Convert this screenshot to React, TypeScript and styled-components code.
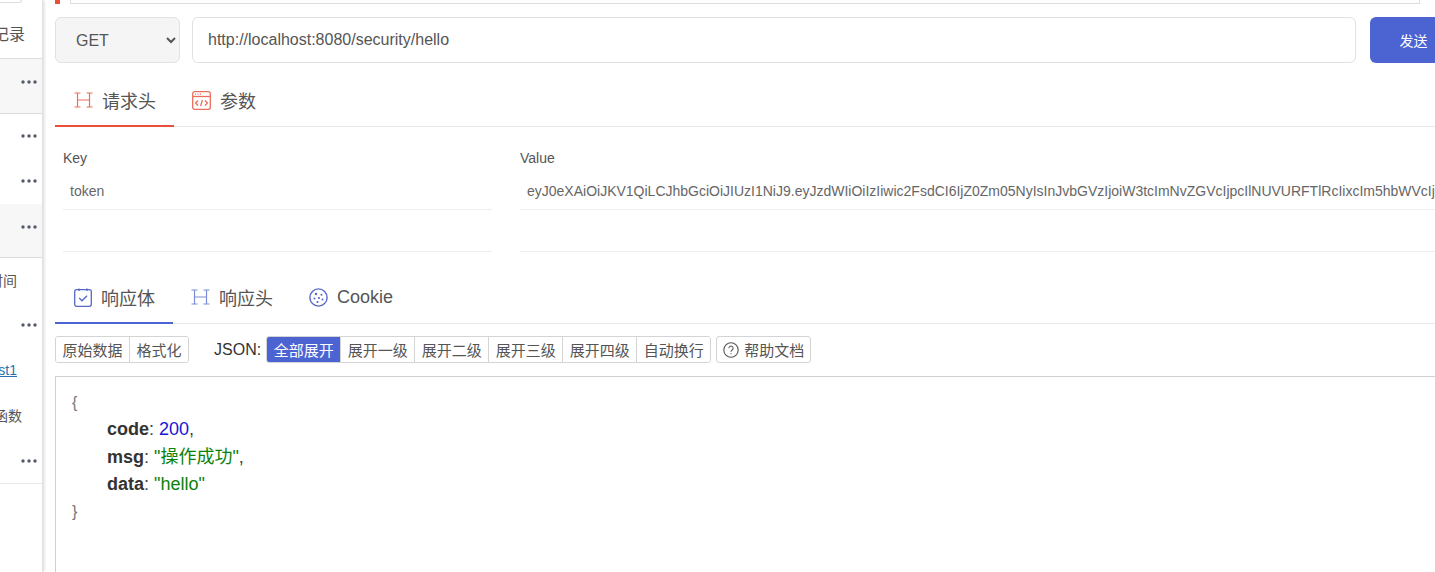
import { createGlobalStyle, styled } from 'styled-components';

const GlobalStyle = createGlobalStyle`
    html, body {
        margin: 0;
        padding: 0;
        background: #fff;
        overflow: hidden;
    }
    * {
        box-sizing: border-box;
    }
    body {
        font-family: 'Liberation Sans', 'Noto Sans CJK SC', sans-serif;
        color: #555;
    }
`;

const TOKEN =
    'eyJ0eXAiOiJKV1QiLCJhbGciOiJIUzI1NiJ9.eyJzdWIiOiIzIiwic2FsdCI6IjZ0Zm05NyIsInJvbGVzIjoiW3tcImNvZGVcIjpcIlNUVURFTlRcIixcIm5hbWVcIjpcIg';

const HISTORY = [
    { selected: true },
    {},
    {},
    { selected: true },
    { label: '时间', trail: 20 },
    {},
    { label: 'test1', trail: 20, link: true },
    { label: '函数', trail: 15 },
    {},
];

const JSON_LEVELS = ['全部展开', '展开一级', '展开二级', '展开三级', '展开四级', '自动换行'];

function Dots() {
    return (
        <svg width='16' height='4' viewBox='0 0 16 4'>
            <circle cx='2' cy='2' r='1.7' fill='#555b66' />
            <circle cx='8' cy='2' r='1.7' fill='#555b66' />
            <circle cx='14' cy='2' r='1.7' fill='#555b66' />
        </svg>
    );
}

function HeaderIcon({ color }: { color: string }) {
    return (
        <svg width='19' height='16' viewBox='0 0 19 16' fill='none' stroke={color} strokeWidth='1.2'>
            <path d='M0.5 1h6M12.5 1h6M0.5 15h6M12.5 15h6M3.5 1v14M15.5 1v14M3.5 8h12' />
        </svg>
    );
}

function ParamsIcon() {
    return (
        <svg width='19' height='19' viewBox='0 0 19 19' fill='none' stroke='#ea6f5d' strokeWidth='1.3'>
            <rect x='0.7' y='0.7' width='17.6' height='17.6' rx='2' />
            <path d='M1 5.5h17' />
            <path d='M3 3.2h1M5.5 3.2h1M8 3.2h1' />
            <path d='M6 9.5l-2.4 2.5L6 14.5M13 9.5l2.4 2.5L13 14.5M10.4 9l-1.8 6' />
        </svg>
    );
}

function BodyIcon() {
    return (
        <svg width='18' height='19' viewBox='0 0 18 19' fill='none' stroke='#5468c8' strokeWidth='1.3'>
            <rect x='0.7' y='1.7' width='16.6' height='16.6' rx='2' />
            <path d='M5 0.5v2.4M13 0.5v2.4' />
            <path d='M5.2 10l2.8 2.8 5-5' />
        </svg>
    );
}

function CookieIcon() {
    return (
        <svg width='19' height='19' viewBox='0 0 19 19' fill='none'>
            <circle cx='9.5' cy='9.5' r='8.6' stroke='#5468c8' strokeWidth='1.4' />
            <circle cx='7' cy='6' r='1.2' fill='#5468c8' />
            <circle cx='12.5' cy='6.8' r='1' fill='#5468c8' />
            <circle cx='5.5' cy='10.5' r='1' fill='#5468c8' />
            <circle cx='10' cy='10' r='1.1' fill='#5468c8' />
            <circle cx='13.5' cy='11.5' r='1' fill='#5468c8' />
            <circle cx='8.5' cy='14' r='1.1' fill='#5468c8' />
        </svg>
    );
}

function HelpIcon() {
    return (
        <svg width='16' height='16' viewBox='0 0 16 16' fill='none' stroke='#555' strokeWidth='1.1'>
            <circle cx='8' cy='8' r='7.2' />
            <path d='M5.9 6.2a2.1 2.1 0 1 1 3.2 1.8c-.7.4-1.1.9-1.1 1.7' />
            <path d='M8 11.2v1' />
        </svg>
    );
}

export default function App() {
    return (
        <>
            <GlobalStyle />
            <Page>
                <Sidebar>
                    <SearchEdge />
                    <SidebarTitle>
                        <span>历史记录</span>
                    </SidebarTitle>
                    {HISTORY.map((item, index) => (
                        <HistoryRow key={index} $selected={item.selected}>
                            {item.label && (
                                <HistoryLabel $trail={item.trail} $link={item.link}>
                                    {item.label}
                                </HistoryLabel>
                            )}
                            <Dots />
                        </HistoryRow>
                    ))}
                </Sidebar>
                <Main>
                    <NameBar>
                        <RedMark />
                        <NameInput />
                    </NameBar>
                    <RequestBar>
                        <MethodSelect defaultValue='GET'>
                            <option>GET</option>
                        </MethodSelect>
                        <UrlInput defaultValue='http://localhost:8080/security/hello' />
                        <SendButton>发送</SendButton>
                    </RequestBar>
                    <Tabs>
                        <Tab $active='#e8503a'>
                            <HeaderIcon color='#ea6f5d' />
                            请求头
                        </Tab>
                        <Tab>
                            <ParamsIcon />
                            参数
                        </Tab>
                    </Tabs>
                    <ParamTable>
                        <ParamHead>Key</ParamHead>
                        <ParamHead>Value</ParamHead>
                        <ParamCell>token</ParamCell>
                        <ParamCell>{TOKEN}</ParamCell>
                        <ParamCell />
                        <ParamCell />
                    </ParamTable>
                    <ResponseTabs>
                        <Tab $active='#4c63d2'>
                            <BodyIcon />
                            响应体
                        </Tab>
                        <Tab>
                            <HeaderIcon color='#7c8cd8' />
                            响应头
                        </Tab>
                        <Tab>
                            <CookieIcon />
                            Cookie
                        </Tab>
                    </ResponseTabs>
                    <Toolbar>
                        <ButtonGroup>
                            <GroupButton>原始数据</GroupButton>
                            <GroupButton>格式化</GroupButton>
                        </ButtonGroup>
                        <JsonLabel>JSON:</JsonLabel>
                        <ButtonGroup>
                            {JSON_LEVELS.map((level, index) => (
                                <GroupButton key={level} $active={index === 0}>
                                    {level}
                                </GroupButton>
                            ))}
                        </ButtonGroup>
                        <HelpButton>
                            <HelpIcon />
                            帮助文档
                        </HelpButton>
                    </Toolbar>
                    <CodeBox>
                        <Brace>{'{'}</Brace>
                        <CodeLine>
                            <CodeKey>code</CodeKey>: <CodeNumber>200</CodeNumber>,
                        </CodeLine>
                        <CodeLine>
                            <CodeKey>msg</CodeKey>: <CodeString>"操作成功"</CodeString>,
                        </CodeLine>
                        <CodeLine>
                            <CodeKey>data</CodeKey>: <CodeString>"hello"</CodeString>
                        </CodeLine>
                        <Brace>{'}'}</Brace>
                    </CodeBox>
                </Main>
            </Page>
        </>
    );
}

const Page = styled.div`
    display: flex;
    width: 1435px;
    height: 572px;
    overflow: hidden;
    background: #fff;
`;

const Sidebar = styled.aside`
    flex: 0 0 43px;
    display: flex;
    flex-direction: column;
    overflow: hidden;
    border-right: 1px solid #e2e2e2;
    box-shadow: 1px 0 3px rgba(0, 0, 0, 0.16);
    position: relative;
    z-index: 1;
`;

const SearchEdge = styled.div`
    flex: 0 0 3px;
    width: 22px;
    border: 1px solid #ddd;
    border-top: none;
    border-left: none;
    border-bottom-right-radius: 10px;
`;

const SidebarTitle = styled.div`
    flex: 0 0 56px;
    display: flex;
    justify-content: flex-end;
    padding: 20px 17px 0 0;
    border-bottom: 1px solid #ddd;
    font-size: 16px;
    line-height: 24px;
    color: #555;
    white-space: nowrap;

    span {
        flex-shrink: 0;
    }
`;

const HistoryRow = styled.div<{ $selected?: boolean }>`
    display: flex;
    flex-shrink: 0;
    align-items: center;
    justify-content: flex-end;
    height: ${(p) => (p.$selected ? '55px' : '45px')};
    padding: ${(p) => (p.$selected ? '0 5px 8px 0' : '0 5px 0 0')};
    background: ${(p) => (p.$selected ? '#f7f7f7' : '#fff')};
    border-bottom: 1px solid ${(p) => (p.$selected ? '#ddd' : 'transparent')};

    &:nth-child(6) {
        height: 54px;
    }

    &:last-child {
        height: 46px;
        border-bottom-color: #e8e8e8;
    }
`;

const HistoryLabel = styled.span<{ $trail?: number; $link?: boolean }>`
    flex-shrink: 0;
    margin-right: ${(p) => p.$trail ?? 20}px;
    font-size: 14px;
    white-space: nowrap;
    color: ${(p) => (p.$link ? '#2a6fb0' : '#555')};
    text-decoration: ${(p) => (p.$link ? 'underline' : 'none')};
`;

const Main = styled.main`
    flex: 1;
    min-width: 0;
    display: flex;
    flex-direction: column;
    padding-left: 12px;
    overflow: hidden;
`;

const NameBar = styled.div`
    flex: 0 0 4px;
    display: flex;
    gap: 10px;
    padding-right: 15px;
`;

const RedMark = styled.span`
    width: 5px;
    height: 4px;
    background: #e8503a;
`;

const NameInput = styled.div`
    flex: 1;
    border: 1px solid #ddd;
    border-top: none;
`;

const RequestBar = styled.div`
    flex: 0 0 46px;
    display: flex;
    gap: 12px;
    margin: 13px -22px 0 0;
`;

const MethodSelect = styled.select`
    flex: 0 0 125px;
    padding-left: 16px;
    border: 1px solid #e2e2e2;
    border-radius: 6px;
    background: #f5f5f5;
    color: #555;
    font: 16px 'Liberation Sans', sans-serif;
    outline: none;
`;

const UrlInput = styled.input`
    flex: 1;
    min-width: 0;
    padding: 0 15px;
    border: 1px solid #e2e2e2;
    border-radius: 6px;
    color: #555;
    font: 16px 'Liberation Sans', sans-serif;
    outline: none;
`;

const SendButton = styled.button`
    flex: 0 0 87px;
    margin-left: 2px;
    border: none;
    border-radius: 6px;
    background: #4c63d2;
    color: #fff;
    font: 14px 'Liberation Sans', 'Noto Sans CJK SC', sans-serif;
`;

const Tabs = styled.div`
    flex: 0 0 64px;
    display: flex;
    align-items: flex-end;
    border-bottom: 1px solid #e8e8e8;
`;

const ResponseTabs = styled(Tabs)`
    flex-basis: 72px;
`;

const Tab = styled.div<{ $active?: string }>`
    display: flex;
    align-items: center;
    gap: 9px;
    height: 52px;
    padding: 0 18px 0 19px;
    border-bottom: 2px solid ${(p) => p.$active ?? 'transparent'};
    margin-bottom: -1px;
    font-size: 18px;
    color: #555;
    white-space: nowrap;

    & + & {
        padding-left: 18px;
    }
`;

const ParamTable = styled.div`
    display: grid;
    grid-template-columns: 429px 1fr;
    column-gap: 28px;
    margin: 21px 0 0 8px;
    grid-auto-rows: 42px;
    grid-template-rows: 20px;
`;

const ParamHead = styled.div`
    font-size: 14px;
    line-height: 20px;
    color: #555;
`;

const ParamCell = styled.div`
    min-width: 0;
    padding: 14px 0 0 7px;
    border-bottom: 1px solid #eee;
    font-size: 14px;
    line-height: 18px;
    color: #666;
    white-space: nowrap;
    overflow: hidden;
`;

const Toolbar = styled.div`
    flex: 0 0 27px;
    display: flex;
    align-items: stretch;
    margin-top: 12px;
`;

const ButtonGroup = styled.div`
    display: flex;
    border: 1px solid #d4d4d4;
    border-radius: 3px;
    overflow: hidden;
`;

const GroupButton = styled.span<{ $active?: boolean }>`
    display: flex;
    align-items: center;
    padding: 0 6.5px;
    border-left: 1px solid #d4d4d4;
    background: ${(p) => (p.$active ? '#4c63d2' : '#fff')};
    color: ${(p) => (p.$active ? '#fff' : '#555')};
    font-size: 15px;
    white-space: nowrap;

    &:first-child {
        border-left: none;
    }
`;

const JsonLabel = styled.span`
    display: flex;
    align-items: center;
    margin: 0 5px 0 25px;
    font-size: 16px;
    color: #333;
`;

const HelpButton = styled.span`
    display: flex;
    align-items: center;
    gap: 5px;
    margin-left: 5px;
    padding: 0 6px;
    border: 1px solid #d4d4d4;
    border-radius: 3px;
    font-size: 15px;
    color: #555;
    white-space: nowrap;
`;

const CodeBox = styled.div`
    flex: 1;
    margin-top: 13px;
    padding: 12px 0 0 16px;
    border: 1px solid #d0d0d0;
    border-right: none;
    border-bottom: none;
    font-size: 18px;
    line-height: 27.3px;
    color: #444;
`;

const Brace = styled.div`
    font-size: 16px;
    color: #777;
`;

const CodeLine = styled.div`
    padding-left: 35px;
`;

const CodeKey = styled.b`
    color: #333;
`;

const CodeNumber = styled.span`
    color: #1616d8;
`;

const CodeString = styled.span`
    color: #0a820a;
`;
